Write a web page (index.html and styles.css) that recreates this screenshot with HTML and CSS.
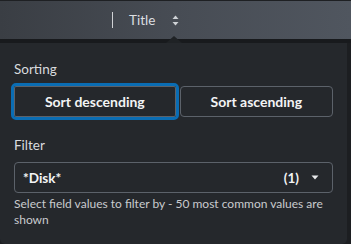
FILE: index.html
```html
<!DOCTYPE html>
<html>
<head>
<meta charset="utf-8">
<link rel="stylesheet" href="styles.css">
</head>
<body>
<div class="screen">
  <div class="topbar">
    <span class="divider"></span>
    <span class="col-title">Title</span>
    <svg class="sort-icon" width="7" height="11" viewBox="0 0 7 11">
      <path d="M3.5 0.5 L6.5 4 L0.5 4 Z" fill="#cfd2d6"/>
      <path d="M0.5 7 L6.5 7 L3.5 10.5 Z" fill="#cfd2d6"/>
    </svg>
  </div>
  <div class="band"></div>
  <div class="popup">
    <div class="label">Sorting</div>
    <div class="btn-row">
      <button class="btn focused">Sort descending</button>
      <button class="btn">Sort ascending</button>
    </div>
    <div class="label filter-label">Filter</div>
    <div class="select">
      <span class="select-value">*Disk*</span>
      <span class="select-count">(1)</span>
      <svg class="select-caret" width="8" height="5" viewBox="0 0 8 5"><path d="M0.5 0.5 L7.5 0.5 L4 4.5 Z" fill="#e8e9eb"/></svg>
    </div>
    <div class="help">Select field values to filter by - 50 most common values are shown</div>
  </div>
  <div class="caret"></div>
</div>
</body>
</html>
```
FILE: styles.css
```css
html, body {
  margin: 0;
  padding: 0;
}
body {
  background: #1c1e21;
  font-family: "Lato", "Liberation Sans", sans-serif;
  width: 351px;
  height: 244px;
  overflow: hidden;
}
.screen {
  position: relative;
  width: 351px;
  height: 244px;
}
.topbar {
  height: 38px;
  border-top: 1px solid #1e2023;
  background: linear-gradient(to right, #3a3e44 0%, #474c54 50%, #50565f 100%);
  display: flex;
  align-items: center;
  padding-left: 112px;
}
.divider {
  width: 1px;
  height: 16px;
  background: #d0d2d5;
  margin-right: 16px;
}
.col-title {
  color: #dcdee1;
  font-size: 13.5px;
  margin-right: 17px;
}
.sort-icon {
  display: block;
}
.band {
  height: 4px;
  background: #181a1d;
}
.popup {
  width: 347px;
  height: 201px;
  box-sizing: border-box;
  background: #25282c;
  border-radius: 0 0 5px 5px;
  padding: 18px 14px 0 14px;
}
.label {
  color: #d9dbde;
  font-size: 13.5px;
  line-height: 16px;
}
.btn-row {
  display: flex;
  gap: 4px;
  margin-top: 9px;
}
.btn {
  flex: 1 1 auto;
  height: 31px;
  box-sizing: border-box;
  border: 1px solid #5c626a;
  border-radius: 4px;
  background: transparent;
  color: #f3f4f5;
  font-family: inherit;
  font-weight: 700;
  font-size: 14px;
  padding: 0;
}
.btn.focused {
  outline: 3px solid #0a6db4;
  outline-offset: 0px;
  border-radius: 2px;
}
.filter-label {
  margin-top: 20px;
}
.select {
  margin-top: 9px;
  height: 31px;
  box-sizing: border-box;
  border: 1px solid #5c626a;
  border-radius: 4px;
  display: flex;
  align-items: center;
  padding: 0 13px 0 8px;
  color: #f3f4f5;
  font-weight: 700;
  font-size: 13.5px;
}
.select-value {
  flex: 1;
}
.select-count {
  margin-right: 12px;
}
.select-caret {
  display: block;
}
.help {
  margin-top: 3px;
  color: #c9cbce;
  font-size: 12px;
  line-height: 16px;
}
.caret {
  position: absolute;
  left: 166px;
  top: 36px;
  width: 0;
  height: 0;
  border-left: 8px solid transparent;
  border-right: 8px solid transparent;
  border-bottom: 7px solid #1f2225;
}
```
